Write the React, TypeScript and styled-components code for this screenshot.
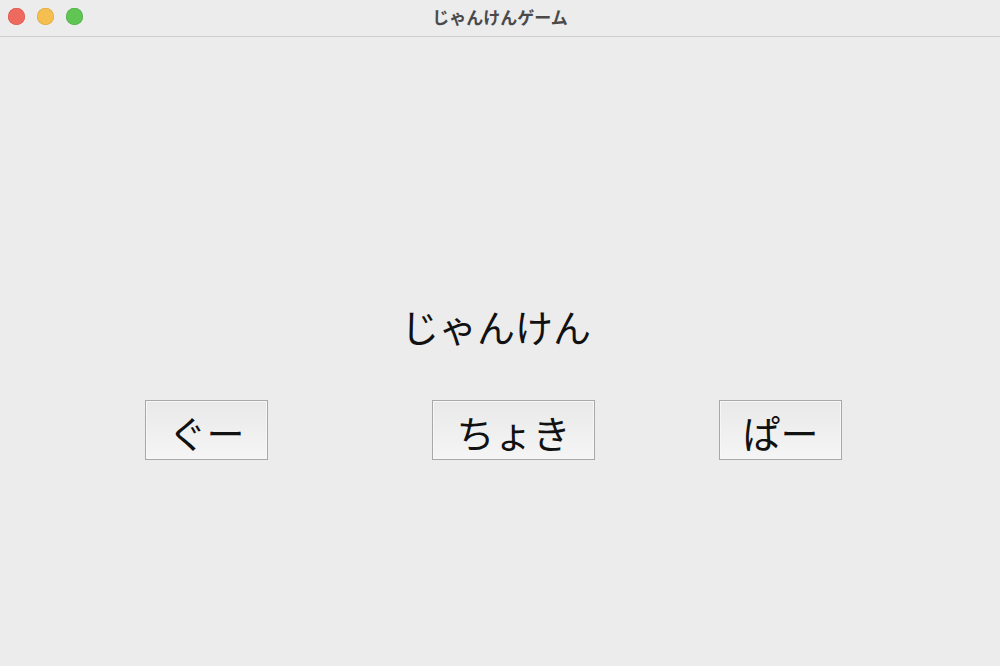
import React from "react";
import styled, { createGlobalStyle } from "styled-components";

const Global = createGlobalStyle`
  html, body { margin: 0; padding: 0; background: #ececec; }
  body { font-family: "Noto Sans CJK JP", "Noto Sans", sans-serif; }
`;

const Window = styled.div`
  width: 1000px;
  height: 666px;
  display: flex;
  flex-direction: column;
  background: #ececec;
  overflow: hidden;
`;

const TitleBar = styled.div`
  height: 36px;
  border-bottom: 1px solid #cfcfcf;
  background: #ececec;
  display: flex;
  align-items: center;
  position: relative;
  flex-shrink: 0;
`;

const Lights = styled.div`
  display: flex;
  gap: 12px;
  position: absolute;
  left: 8px;
  top: 8px;
`;

const Light = styled.span<{ $fill: string; $edge: string }>`
  width: 17px;
  height: 17px;
  border-radius: 50%;
  background: ${(p) => p.$fill};
  box-shadow: inset 0 0 0 0.6px ${(p) => p.$edge};
`;

const WindowTitle = styled.div`
  flex: 1;
  text-align: center;
  font-size: 17px;
  line-height: 20px;
  font-weight: 700;
  color: #4a4a4a;
  padding-bottom: 2px;
`;

const Content = styled.main`
  flex: 1;
  display: flex;
  flex-direction: column;
  padding-top: 266px;
`;

const Message = styled.div`
  text-align: center;
  font-size: 38px;
  line-height: 46px;
  color: #111;
  padding-right: 8px;
`;

const ButtonRow = styled.div`
  display: flex;
  padding-left: 145px;
  margin-top: 51px;
`;

const HandButton = styled.button<{ $gap: number; $w: number }>`
  margin-left: ${(p) => p.$gap}px;
  width: ${(p) => p.$w}px;
  height: 60px;
  padding: 4px 0 0;
  border: 1px solid #a8a8a8;
  border-radius: 0;
  background: linear-gradient(#e9e9e9, #f5f5f5);
  box-shadow: inset 0 0 0 1px #f7f7f7;
  font-family: "Noto Sans CJK JP", "Noto Sans", sans-serif;
  font-size: 38px;
  line-height: 1;
  color: #111;
  display: flex;
  align-items: center;
  justify-content: center;
  cursor: pointer;
`;

const hands = [
  { label: "ぐー", gap: 0, w: 123 },
  { label: "ちょき", gap: 164, w: 163 },
  { label: "ぱー", gap: 124, w: 123 },
];

export default function App() {
  return (
    <>
      <Global />
      <Window>
        <TitleBar>
          <Lights>
            <Light $fill="#ee6a5f" $edge="#d8534a" />
            <Light $fill="#f5bf4f" $edge="#d9a33a" />
            <Light $fill="#61c554" $edge="#4ea844" />
          </Lights>
          <WindowTitle>じゃんけんゲーム</WindowTitle>
        </TitleBar>
        <Content>
          <Message>じゃんけん</Message>
          <ButtonRow>
            {hands.map((h) => (
              <HandButton key={h.label} $gap={h.gap} $w={h.w}>
                {h.label}
              </HandButton>
            ))}
          </ButtonRow>
        </Content>
      </Window>
    </>
  );
}
